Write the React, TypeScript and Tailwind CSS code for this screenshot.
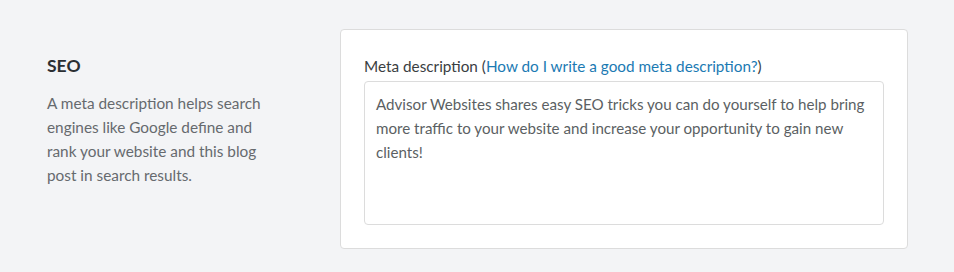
export default function App() {
  return (
    <div
      className="w-[954px] h-[272px] bg-[#f3f4f6] flex pt-[29px]"
      style={{ fontFamily: '"Lato", "Open Sans", sans-serif' }}
    >
      <div className="w-[340px] pl-[47px] pr-[60px] pt-[25px]">
        <h2 className="text-[17.5px] font-bold text-[#2b2f33] leading-[24px]">SEO</h2>
        <p className="mt-[13px] text-[15.35px] leading-[24px] text-[#666a6e]">
          A meta description helps search engines like Google define and rank your website and this blog post in search
          results.
        </p>
      </div>
      <div className="w-[568px] h-[220px] bg-white border border-[#dcdcdc] rounded-[4px] px-[23px] pt-[24px]">
        <label className="block text-[15.3px] leading-[24px] text-[#3a3e42]">
          Meta description (
          <a className="text-[#1b7ab3]" href="#">
            How do I write a good meta description?
          </a>
          )
        </label>
        <div className="mt-[3px] h-[144px] border border-[#dcdcdc] rounded-[4px] pl-[11px] pr-[8px] py-[10px] text-[15.15px] leading-[24px] text-[#5b5f63]">
          Advisor Websites shares easy SEO tricks you can do yourself to help bring more traffic to your website and
          increase your opportunity to gain new clients!
        </div>
      </div>
    </div>
  )
}
